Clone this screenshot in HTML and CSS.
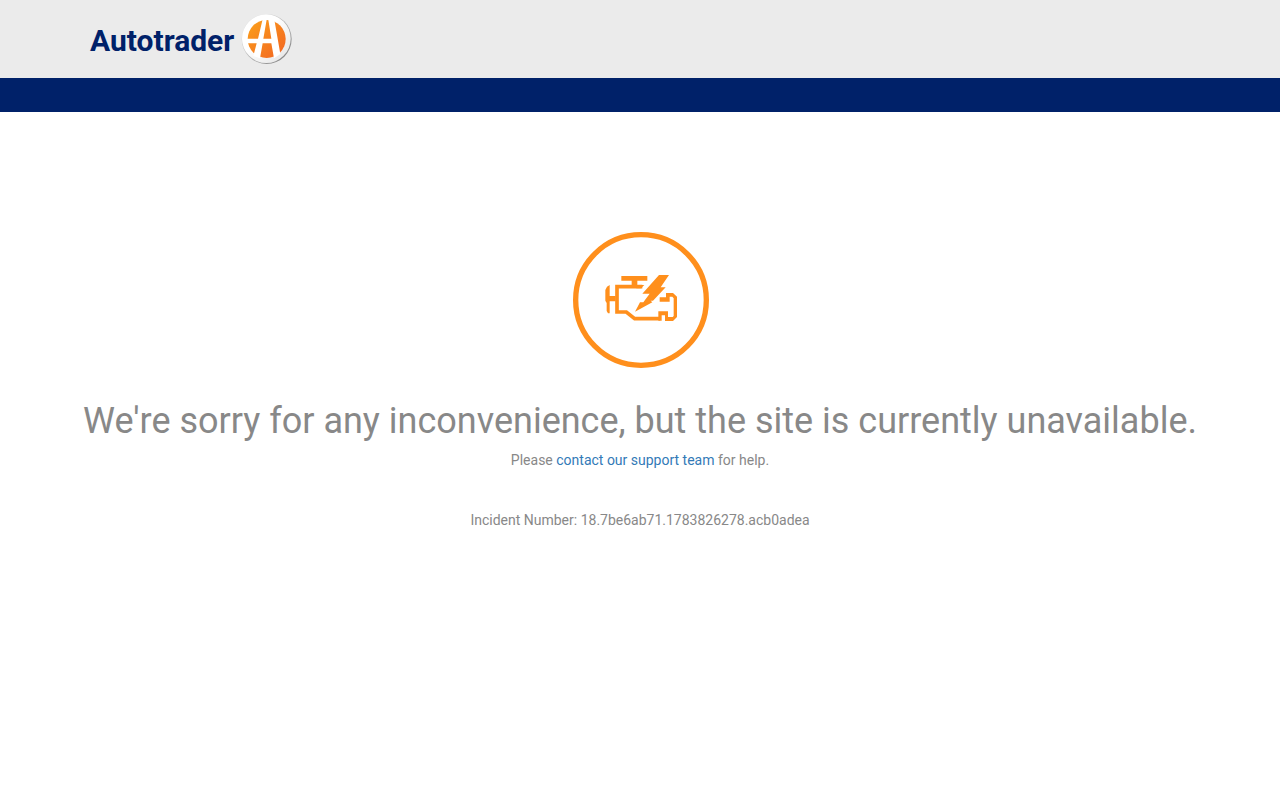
FILE: index.html
```html
<!DOCTYPE html>
<html lang="en">
<head>
  <meta charset="UTF-8">
  <meta name="viewport" content="width=device-width, initial-scale=1">
  <title>Autotrader - page unavailable</title>
  <link rel="stylesheet" href="styles.css">
</head>
<body>
  <header>
    <div class="header-top">
      <div class="container brand">
        <span class="brand-name">Autotrader</span>
        <svg class="brand-logo" viewBox="0 0 156 156" aria-hidden="true">
          <defs>
            <linearGradient id="orange" x1="0" y1="0" x2="1" y2="1">
              <stop offset="0" stop-color="#fba11b"/>
              <stop offset="1" stop-color="#f26322"/>
            </linearGradient>
            <linearGradient id="rim" x1="0" y1="0" x2="1" y2="1">
              <stop offset="0.4" stop-color="#ffffff"/>
              <stop offset="1" stop-color="#e2e2e2"/>
            </linearGradient>
            <linearGradient id="edge" x1="0" y1="0" x2="1" y2="1">
              <stop offset="0.2" stop-color="#dddddd"/>
              <stop offset="1" stop-color="#777777"/>
            </linearGradient>
          </defs>
          <circle cx="77" cy="78" r="75" fill="url(#edge)"/>
          <circle cx="76" cy="77" r="73" fill="url(#rim)"/>
          <circle cx="77" cy="78" r="57" fill="url(#orange)"/>
          <path fill="#fff" d="M66 14 51 77H17v14h30l-10 38 20 7 8-45h26l8 45 19-13L99 14H81l10 63H67l11-63z"/>
        </svg>
      </div>
    </div>
    <div class="header-bar"></div>
  </header>

  <main class="container message">
    <svg class="engine" viewBox="18 18 414 414" aria-hidden="true">
      <g fill="none" stroke="#ff8f1c">
        <circle cx="228" cy="225" r="196" stroke-width="16"/>
        <path stroke-width="11" d="M232 185H156v76h28l25 20h76"/>
      </g>
      <g fill="#ff8f1c">
        <path d="M169 153h78v14h-30v14h-17v-14h-31z"/>
        <path d="M214 180h24l-10 10h-14z"/>
        <path d="M134 180v33h18v16h-18v36h-5l-4-7v-24l-4-7v-32l5-10z"/>
        <path d="M282 150h30l-25 37h15l-38 40h-7l5 5-52 28 15-28h10l19-26h-22z"/>
        <path d="M280 259h29v17h14l3-3v-53l-4-5h-8v15h-30v-13h19v-13h21l12 11v61l-12 12h-24v-17h-10v16h-10z"/>
      </g>
    </svg>
    <h1>We're sorry for any inconvenience, but the site is currently unavailable.</h1>
    <p>Please <a href="#">contact our support team</a> for help.</p>
    <p class="incident">Incident Number: 18.7be6ab71.1783826278.acb0adea</p>
  </main>
</body>
</html>
```

FILE: styles.css
```css
* {
  box-sizing: border-box;
}
body {
  margin: 0;
  font-family: Roboto, "Liberation Sans", sans-serif;
  font-size: 14px;
  line-height: 20px;
  color: #888;
  background-color: #fff;
}
a {
  color: #337ab7;
  text-decoration: none;
}
a:hover {
  text-decoration: underline;
}
.container {
  max-width: 1170px;
  margin: 0 auto;
  padding: 0 15px;
}
.header-top {
  padding: 13px 0;
  background-color: #ebebeb;
}
.header-bar {
  height: 34px;
  background-color: #002169;
}
.brand {
  display: flex;
  align-items: center;
  gap: 7px;
  padding-left: 35px;
}
.brand-name {
  padding-top: 4px;
  font-size: 30px;
  line-height: 48px;
  font-weight: bold;
  color: #002169;
}
.brand-logo {
  width: 52px;
  height: 52px;
}
.message {
  padding-top: 119px;
  text-align: center;
}
.engine {
  display: block;
  width: 138px;
  height: 138px;
  margin: 0 auto;
}
h1 {
  margin: 32px 0 9px;
  font-size: 36px;
  line-height: 40px;
  font-weight: normal;
}
p {
  margin: 0;
}
.incident {
  margin-top: 40px;
}
```
